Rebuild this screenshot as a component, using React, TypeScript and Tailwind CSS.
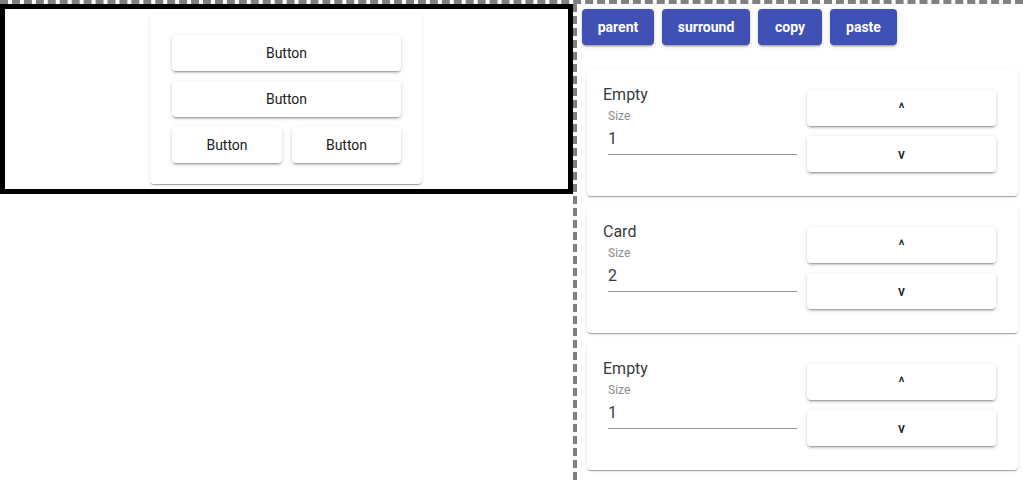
const paperShadow =
  "shadow-[0px_2px_1px_-1px_rgba(0,0,0,0.2),0px_1px_1px_0px_rgba(0,0,0,0.14),0px_1px_3px_0px_rgba(0,0,0,0.12)]";
const btnShadow =
  "shadow-[0px_3px_1px_-2px_rgba(0,0,0,0.2),0px_2px_2px_0px_rgba(0,0,0,0.14),0px_1px_5px_0px_rgba(0,0,0,0.12)]";

// Plain white raised button
const WhiteButton = ({ children, className = "" }) => (
  <button
    className={`h-9 flex items-center justify-center rounded bg-white text-sm text-[#212121] ${btnShadow} ${className}`}
  >
    {children}
  </button>
);

// Blue toolbar button
const ToolButton = ({ label, className }) => (
  <button
    className={`h-9 flex items-center justify-center rounded bg-[#3f51b5] text-sm font-bold text-white ${btnShadow} ${className}`}
  >
    {label}
  </button>
);

// One node row on the right side
const NodeCard = ({ title, size }) => (
  <div className={`flex items-start rounded bg-white pl-4 pr-[22px] pt-[14px] pb-6 ${paperShadow}`}>
    <div className="flex-1 flex flex-col">
      <div className="text-base leading-6 text-[#3a3a3a]">{title}</div>
      <div className="mt-[3px] ml-[5px] text-xs leading-3 text-[#8a8a8a]">Size</div>
      <div className="mt-px ml-[5px] mr-[10px] pt-[6px] pb-[6px] text-base leading-[19px] text-[#3a3a3a] border-b border-[#949494]">
        {size}
      </div>
    </div>
    <div className="w-[189px] mt-[7px] flex flex-col gap-[10px]">
      <WhiteButton className="font-medium">^</WhiteButton>
      <WhiteButton className="font-medium">v</WhiteButton>
    </div>
  </div>
);

const App = () => {
  return (
    <div className="w-[1023px] h-[480px] overflow-hidden bg-white font-['Roboto',sans-serif] border-t-4 border-dashed border-[#808080] flex items-start">
      {/* Preview panel */}
      <div className="w-[573px] border-[5px] border-black py-[5px] pl-[5px] pr-[6px] flex justify-center">
        <div className={`w-[272px] rounded bg-white pl-[22px] pr-[21px] py-[21px] flex flex-col gap-[10px] ${paperShadow}`}>
          <WhiteButton>Button</WhiteButton>
          <WhiteButton>Button</WhiteButton>
          <div className="flex gap-[10px]">
            <WhiteButton className="w-[110px]">Button</WhiteButton>
            <WhiteButton className="flex-1">Button</WhiteButton>
          </div>
        </div>
      </div>

      {/* Editor panel */}
      <div className="flex-1 h-[476px] border-l-4 border-dashed border-[#808080] p-[5px]">
        <div className="flex gap-2">
          <ToolButton label="parent" className="w-[72px]" />
          <ToolButton label="surround" className="w-[88px]" />
          <ToolButton label="copy" className="w-[64px]" />
          <ToolButton label="paste" className="w-[67px]" />
        </div>
        <div className="mt-6 pl-[5px] flex flex-col gap-[10px]">
          <NodeCard title="Empty" size="1" />
          <NodeCard title="Card" size="2" />
          <NodeCard title="Empty" size="1" />
        </div>
      </div>
    </div>
  );
};

export default App;
